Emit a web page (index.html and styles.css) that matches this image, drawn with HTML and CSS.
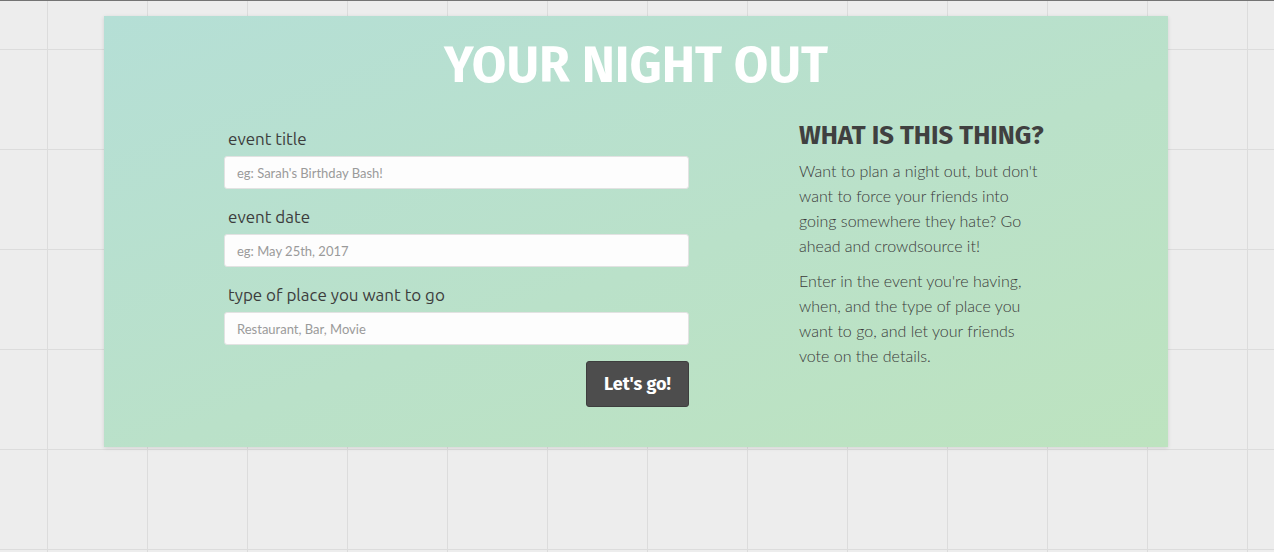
FILE: index.html
```html
<!DOCTYPE html>
<html>
<head>
<meta charset="utf-8">
<link rel="stylesheet" href="styles.css">
</head>
<body>
<div class="card">
  <h1 class="title">YOUR NIGHT OUT</h1>
  <div class="content">
    <form class="form">
      <label class="label">event title</label>
      <input class="input" type="text" placeholder="eg: Sarah's Birthday Bash!">
      <label class="label">event date</label>
      <input class="input" type="text" placeholder="eg: May 25th, 2017">
      <label class="label">type of place you want to go</label>
      <input class="input" type="text" placeholder="Restaurant, Bar, Movie">
      <div class="actions"><button class="btn" type="button">Let's go!</button></div>
    </form>
    <div class="about">
      <h2 class="about-title">WHAT IS THIS THING?</h2>
      <p class="about-text">Want to plan a night out, but don't want to force your friends into going somewhere they hate? Go ahead and crowdsource it!</p>
      <p class="about-text">Enter in the event you're having, when, and the type of place you want to go, and let your friends vote on the details.</p>
    </div>
  </div>
</div>
</body>
</html>
```
FILE: styles.css
```css
html, body { margin: 0; padding: 0; }
body {
  height: 552px;
  box-sizing: border-box;
  border-top: 1px solid #747474;
  background-color: #ededed;
  background-image:
    linear-gradient(to right, #dcdcdc 1px, transparent 1px),
    linear-gradient(to bottom, #dcdcdc 1px, transparent 1px);
  background-size: 100px 100px;
  background-position: 47px 49px;
  font-family: "Open Sans", sans-serif;
  overflow: hidden;
}
.card {
  margin: 15px 0 0 104px;
  width: 1064px;
  height: 431px;
  box-sizing: border-box;
  padding-top: 21px;
  background: linear-gradient(160deg, #b5dfd6 0%, #bae1c9 55%, #bde3bf 100%);
  box-shadow: 0 1px 4px rgba(0,0,0,0.12);
}
.title {
  margin: 0;
  text-align: center;
  color: #ffffff;
  font-family: "Fira Sans", "Roboto", sans-serif;
  font-weight: 700;
  font-size: 50px;
  line-height: 56px;
  letter-spacing: 0;
}
.content {
  display: flex;
  margin: 25px 0 0 120px;
  gap: 110px;
}
.form {
  width: 465px;
  padding-top: 9px;
  display: flex;
  flex-direction: column;
}
.label {
  margin: 0 0 5px 4px;
  font-family: "Ubuntu", "Open Sans", sans-serif;
  font-size: 17px;
  line-height: 24px;
  color: #3c3c3c;
}
.input {
  box-sizing: border-box;
  height: 33px;
  margin: 0 0 16px 0;
  padding: 0 12px;
  border: 1px solid #e2e2e2;
  border-radius: 3px;
  background: #fdfdfd;
  font-family: "Lato", sans-serif;
  font-size: 13px;
  color: #333;
}
.input::placeholder { color: #9a9a9a; }
.actions {
  display: flex;
  justify-content: flex-end;
}
.btn {
  width: 103px;
  height: 46px;
  border: 1px solid #3e3e3e;
  border-radius: 3px;
  background: #4d4d4d;
  color: #ffffff;
  font-family: "Fira Sans", "Roboto", sans-serif;
  font-weight: 700;
  font-size: 18px;
  padding: 0;
}
.about {
  width: 245px;
  padding-top: 2px;
}
.about-title {
  margin: 0 0 6px 0;
  color: #404040;
  font-family: "Fira Sans", "Roboto", sans-serif;
  font-weight: 700;
  font-size: 25.7px;
  line-height: 32px;
  white-space: nowrap;
}
.about-text {
  margin: 0 0 10px 0;
  color: #3a3a3a;
  font-family: "Lato", sans-serif;
  font-weight: 300;
  font-size: 16px;
  line-height: 25px;
}
```
